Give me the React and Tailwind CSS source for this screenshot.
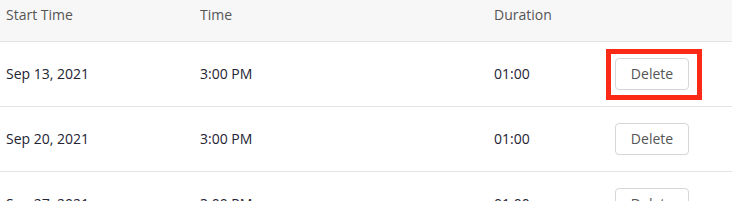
import React from 'react';

const rows = [
  { date: 'Sep 13, 2021', time: '3:00 PM', duration: '01:00', highlight: true },
  { date: 'Sep 20, 2021', time: '3:00 PM', duration: '01:00' },
  { date: 'Sep 27, 2021', time: '3:00 PM', duration: '01:00' },
];

const cols = 'grid grid-cols-[194px_294px_121px_1fr] px-[6px]';

const App = () => {
  return (
    <div className="w-[732px] h-[201px] overflow-hidden bg-white font-['Open_Sans',sans-serif] text-[14px]">
      <div className={`${cols} h-[42px] bg-[#f7f7f7] border-b border-[#e3e3e3] text-[#555555] pt-[5px] leading-[20px]`}>
        <div>Start Time</div>
        <div>Time</div>
        <div>Duration</div>
        <div></div>
      </div>
      {rows.map((row, index) => (
        <div
          key={index}
          className={`${cols} h-[65px] items-center border-b border-[#e3e3e3] text-[#232333] leading-[20px]`}
        >
          <div>{row.date}</div>
          <div>{row.time}</div>
          <div>{row.duration}</div>
          <div className="flex">
            <div className="relative">
              <button className="w-[74px] h-[32px] rounded-[4px] border border-[#d6d6d6] bg-white text-[14px] text-[#555555]">
                Delete
              </button>
              {row.highlight && (
                <span className="absolute -left-[9px] -top-[9px] -right-[13px] -bottom-[10px] border-[5px] border-[#fb2a17]"></span>
              )}
            </div>
          </div>
        </div>
      ))}
    </div>
  );
};

export default App;
